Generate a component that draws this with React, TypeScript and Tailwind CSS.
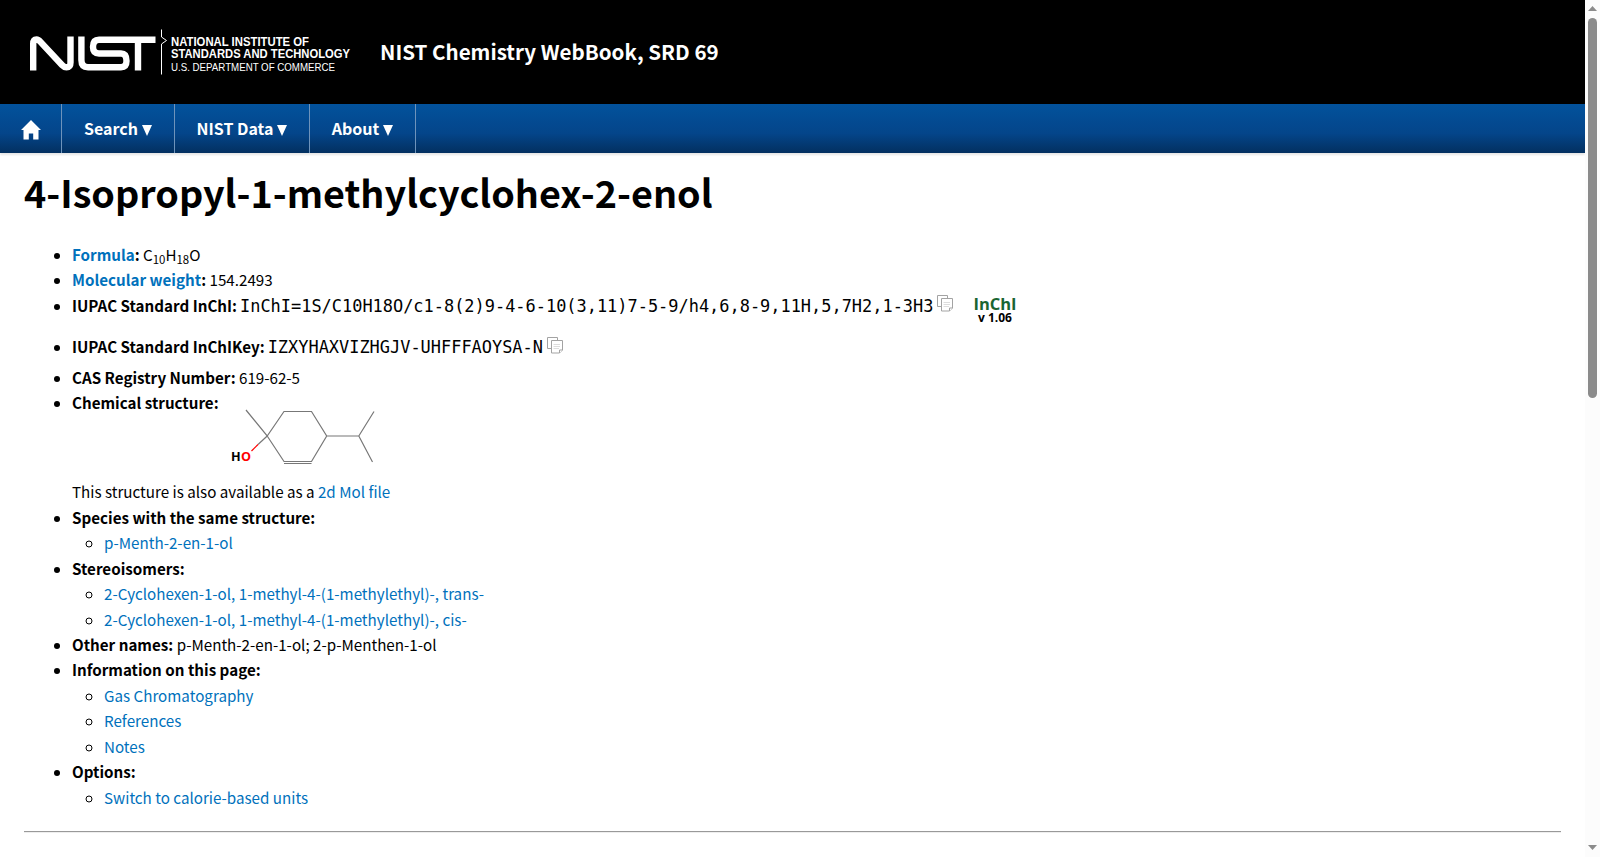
import React from 'react';

const stereoisomers = [
    '2-Cyclohexen-1-ol, 1-methyl-4-(1-methylethyl)-, trans-',
    '2-Cyclohexen-1-ol, 1-methyl-4-(1-methylethyl)-, cis-',
];

const sections = ['Gas Chromatography', 'References', 'Notes'];

const menus = [
    { name: 'Search', width: 'w-[113px]' },
    { name: 'NIST Data', width: 'w-[135px]' },
    { name: 'About', width: 'w-[106px]' },
];

function NistLogo() {
    return (
        <svg width="324" height="48" viewBox="29 28.500 324 48" className="block overflow-visible" fill="none">
            <g stroke="#fff" strokeWidth="6.400">
                <path d="M33.200 71V44.500Q33.200 40 36.500 40Q38.500 40 40.500 42.500L62 65.500Q64 67.700 66.500 67.700Q70.500 67.700 70.500 63V37" />
                <path d="M81.400 37V60.500Q81.400 67.700 88 67.700H121Q126.500 67.700 126.500 61.500Q126.500 54 121 54H99Q93 54 93 47.500Q93 40.300 99 40.300H155.500" />
                <path d="M138 40V71" />
            </g>
            <path d="M161.500 30V37.500L166.500 41L161.500 44.500V75" stroke="#fff" strokeWidth="1" />
            <g fill="#fff" fontFamily="Liberation Sans">
                <text x="171" y="46.300" fontSize="12" fontWeight="700" textLength="138" lengthAdjust="spacingAndGlyphs">NATIONAL INSTITUTE OF</text>
                <text x="171" y="58.800" fontSize="12" fontWeight="700" textLength="179" lengthAdjust="spacingAndGlyphs">STANDARDS AND TECHNOLOGY</text>
                <text x="171" y="71" fontSize="11.500" textLength="164" lengthAdjust="spacingAndGlyphs">U.S. DEPARTMENT OF COMMERCE</text>
            </g>
        </svg>
    );
}

function HomeIcon() {
    return (
        <svg width="20" height="20" viewBox="0 0 20 20" fill="#fff">
            <path d="M10 0L20 10H17.500V19.500H12.200V13.500H7.800V19.500H2.500V10H0Z" />
        </svg>
    );
}

function CopyIcon({ className }: { className?: string }) {
    return (
        <svg width="16" height="17" viewBox="0 0 16 17" className={className} fill="#fff" stroke="#a3a3a3">
            <path d="M0.500 0.500H10.500V11.500H0.500Z" />
            <path d="M4.500 3.500H15.500V13L12.500 16H4.500Z" />
            <path d="M6.500 7.500H13M6.500 9.500H13M6.500 11.500H12" stroke="#ddd" />
            <path d="M12.500 16V13H15.500" />
        </svg>
    );
}

function Structure() {
    return (
        <svg width="146" height="57" viewBox="231 409 146 57" className="block" stroke="#777" strokeWidth="1.200" fill="none">
            <path d="M246 410L267.200 436L284 411.500H311.500L326.700 436L311.500 461.500H284L267.200 436M284 463.500H311.500M326.700 436H358.800L374 411.500M358.800 436L372.500 462" />
            <path d="M267.200 436L258 444.500" />
            <path d="M258 444.500L251.500 451" stroke="#f00" />
            <g stroke="none" fontFamily="Open Sans" fontSize="12.600" fontWeight="700">
                <text x="231" y="461" fill="#000">H</text>
                <text x="241" y="461" fill="#f00">O</text>
            </g>
        </svg>
    );
}

function A({ children }: { children: React.ReactNode }) {
    return <a href="#" className="text-[#0071bc]">{children}</a>;
}

function Scrollbar() {
    return (
        <div className="flex w-[15px] shrink-0 flex-col items-center bg-[#fcfcfc]">
            <svg width="9" height="18" viewBox="0 0 9 18" fill="#8b8b8b"><path d="M0 11L4.500 6L9 11Z" /></svg>
            <div className="h-[380px] w-[9px] rounded-full bg-[#8b8b8b]" />
            <svg width="9" height="12" viewBox="0 0 9 12" fill="#8b8b8b" className="mt-auto"><path d="M0 0L4.500 5L9 0Z" /></svg>
        </div>
    );
}

export default function App() {
    return (
        <div className="flex h-[857px] overflow-hidden bg-white font-['Noto_Sans_CJK_SC',sans-serif] text-[15.180px] leading-[25.430px] text-black">
            <div className="flex min-w-0 flex-1 flex-col">
                <header className="flex h-[104px] shrink-0 items-center bg-black pl-[29px]">
                    <NistLogo />
                    <span className="ml-[27px] text-[20.560px] font-bold text-white">NIST Chemistry WebBook, SRD 69</span>
                </header>

                <nav className="flex h-[49px] shrink-0 bg-linear-to-b from-[#02529c] via-[#04458a] via-60% to-[#033060] text-[16px] font-bold text-white shadow-[0_2px_2px_rgba(0,0,0,0.1)]">
                    <a href="#" className="flex w-[62px] items-center justify-center border-r border-[#6e93bb] pt-[3px]">
                        <HomeIcon />
                    </a>
                    {menus.map((menu) => (
                        <a key={menu.name} href="#" className={`flex items-center justify-center gap-1 border-r border-[#6e93bb] pt-px ${menu.width}`}>
                            {menu.name}
                            <svg width="10" height="11" viewBox="0 0 10 11" fill="#fff" className="mt-[3px]"><path d="M0 0H10L5 11Z" /></svg>
                        </a>
                    ))}
                </nav>

                <main className="px-6">
                    <h1 className="mt-2 text-[37.740px] leading-[61px] font-bold">4-Isopropyl-1-methylcyclohex-2-enol</h1>
                    <ul className="mt-5 list-disc pl-12 marker:text-[14.600px]">
                        <li>
                            <b><A>Formula</A>:</b> C<sub className="text-[11.400px]">10</sub>H<sub className="text-[11.400px]">18</sub>O
                        </li>
                        <li><b><A>Molecular weight</A>:</b> 154.2493</li>
                        <li className="h-[41px]">
                            <div className="flex h-[41px]">
                                <b>IUPAC Standard InChI:</b>
                                <span className="mt-px ml-[3px] font-['DejaVu_Sans_Mono',monospace] text-[16.940px]">InChI=1S/C10H18O/c1-8(2)9-4-6-10(3,11)7-5-9/h4,6,8-9,11H,5,7H2,1-3H3</span>
                                <CopyIcon className="mt-[2px] ml-1" />
                                <span className="mt-1 ml-5 flex flex-col items-center font-['Open_Sans',sans-serif] leading-[14px] font-bold">
                                    <span className="text-[16.500px]">
                                        <span className="text-[#1a6532]">InChI</span>
                                    </span>
                                    <span className="text-[12px]">v 1.06</span>
                                </span>
                            </div>
                        </li>
                        <li className="h-[31px]">
                            <div className="flex">
                                <b>IUPAC Standard InChIKey:</b>
                                <span className="mt-px ml-[3px] font-['DejaVu_Sans_Mono',monospace] text-[16.940px]">IZXYHAXVIZHGJV-UHFFFAOYSA-N</span>
                                <CopyIcon className="mt-[3px] ml-1" />
                            </div>
                        </li>
                        <li><b>CAS Registry Number:</b> 619-62-5</li>
                        <li>
                            <div className="flex h-[89px]">
                                <b>Chemical structure:</b>
                                <div className="mt-[19px] ml-3"><Structure /></div>
                            </div>
                            <div>This structure is also available as a <A>2d Mol file</A></div>
                        </li>
                        <li>
                            <b>Species with the same structure:</b>
                            <ul className="list-[circle] pl-8">
                                <li><A>p-Menth-2-en-1-ol</A></li>
                            </ul>
                        </li>
                        <li>
                            <b>Stereoisomers:</b>
                            <ul className="list-[circle] pl-8">
                                {stereoisomers.map((name) => <li key={name}><A>{name}</A></li>)}
                            </ul>
                        </li>
                        <li><b>Other names:</b> p-Menth-2-en-1-ol; 2-p-Menthen-1-ol</li>
                        <li>
                            <b>Information on this page:</b>
                            <ul className="list-[circle] pl-8">
                                {sections.map((name) => <li key={name}><A>{name}</A></li>)}
                            </ul>
                        </li>
                        <li>
                            <b>Options:</b>
                            <ul className="list-[circle] pl-8">
                                <li><A>Switch to calorie-based units</A></li>
                            </ul>
                        </li>
                    </ul>
                    <hr className="mt-[21px] h-[2px] border-t border-b border-t-[#999] border-b-[#eee]" />
                </main>
            </div>
            <Scrollbar />
        </div>
    );
}
